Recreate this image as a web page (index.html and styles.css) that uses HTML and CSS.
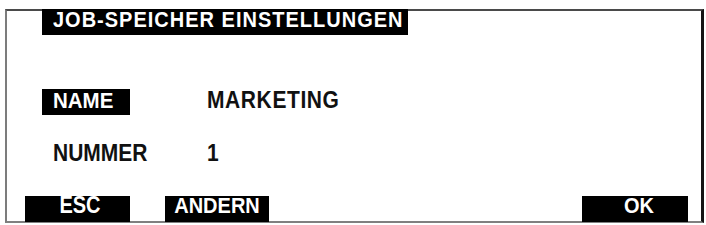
FILE: index.html
```html
<!DOCTYPE html>
<html lang="de">
<head>
<meta charset="utf-8">
<title>Job-Speicher Einstellungen</title>
<link rel="stylesheet" href="styles.css">
</head>
<body>
<div class="frame">
  <div class="title"><span class="txt">JOB-SPEICHER EINSTELLUNGEN</span></div>
  <div class="rows">
    <div class="row">
      <div class="label selected"><span class="txt">NAME</span></div>
      <div class="value"><span class="txt">MARKETING</span></div>
    </div>
    <div class="row">
      <div class="label"><span class="txt">NUMMER</span></div>
      <div class="value"><span class="txt">1</span></div>
    </div>
  </div>
  <div class="buttons">
    <div class="btn btn-esc"><span class="txt tall">ESC</span></div>
    <div class="btn btn-andern"><span class="txt">ANDERN</span></div>
    <div class="spacer"></div>
    <div class="btn btn-ok"><span class="txt">OK</span></div>
  </div>
</div>
</body>
</html>
```
FILE: styles.css
```css
html, body {
  margin: 0;
  padding: 0;
  background: #ffffff;
}
body {
  font-family: "Liberation Sans", Arial, sans-serif;
  font-weight: bold;
  color: #111111;
}
.txt {
  display: inline-block;
  transform: scaleY(1.1);
  transform-origin: 50% 80%;
}
.txt.tall {
  transform: scaleY(1.16);
}
.frame {
  box-sizing: border-box;
  margin: 9px 0 0 5px;
  width: 699px;
  height: 214px;
  border-left: 2px solid #7c7c7c;
  border-top: 2px solid #4a4a4a;
  border-right: 3px solid #151515;
  border-bottom: 2px solid #808080;
  display: flex;
  flex-direction: column;
}
.title {
  box-sizing: border-box;
  margin: -2px 0 0 35px;
  width: 366px;
  height: 26px;
  padding: 0 0 3px 11px;
  background: #000000;
  color: #ffffff;
  font-size: 20px;
  line-height: 23px;
  letter-spacing: 1px;
  white-space: nowrap;
}
.rows {
  margin: 54px 0 0 35px;
  display: flex;
  flex-direction: column;
  gap: 27px;
}
.row {
  display: flex;
  align-items: flex-start;
}
.label {
  box-sizing: border-box;
  width: 88px;
  height: 26px;
  padding: 0 0 3px 11px;
  font-size: 21px;
  line-height: 23px;
  white-space: nowrap;
  margin-right: 75px;
}
.label.selected {
  background: #000000;
  color: #ffffff;
  font-size: 20.5px;
}
.value {
  height: 26px;
  font-size: 21px;
  line-height: 23px;
  letter-spacing: 0.6px;
  padding-left: 2px;
}
.buttons {
  margin-top: auto;
  margin-bottom: -1px;
  display: flex;
  align-items: flex-end;
  padding: 0 13px 0 18px;
}
.btn {
  box-sizing: border-box;
  height: 26px;
  padding-bottom: 6px;
  background: #000000;
  color: #ffffff;
  font-size: 20px;
  line-height: 20px;
  text-align: center;
}
.btn-esc {
  width: 105px;
  padding-left: 5px;
}
.btn-andern {
  width: 104px;
  margin-left: 35px;
}
.btn-ok {
  width: 106px;
  padding-left: 8px;
}
.spacer {
  flex: 1;
}
```
